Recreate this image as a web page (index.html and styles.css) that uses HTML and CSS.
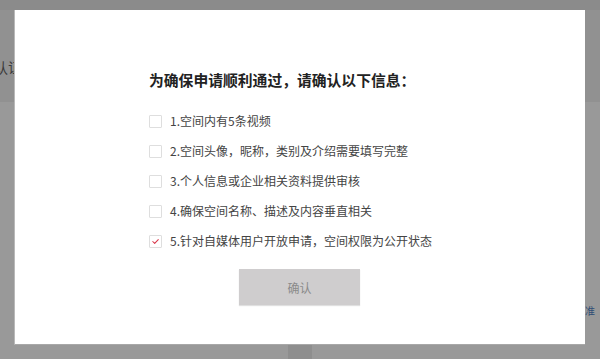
FILE: index.html
```html
<!DOCTYPE html>
<html lang="zh">
<head>
<meta charset="utf-8">
<link rel="stylesheet" href="styles.css">
</head>
<body>
<div class="page">
  <div class="topbar"></div>
  <div class="header"><span class="header-text">认证</span></div>
  <div class="main">
    <span class="side-link">准</span>
  </div>
  <div class="bottom-tab"></div>

  <div class="modal">
    <h2 class="title">为确保申请顺利通过，请确认以下信息：</h2>
    <ul class="list">
      <li class="item"><span class="box"></span><span class="label">1.空间内有5条视频</span></li>
      <li class="item"><span class="box"></span><span class="label">2.空间头像，昵称，类别及介绍需要填写完整</span></li>
      <li class="item"><span class="box"></span><span class="label">3.个人信息或企业相关资料提供审核</span></li>
      <li class="item"><span class="box"></span><span class="label">4.确保空间名称、描述及内容垂直相关</span></li>
      <li class="item"><span class="box checked"><svg viewBox="0 0 14 14" width="13" height="13"><polyline points="3.5,7 6,9.5 10.5,4.5" fill="none" stroke="#d8364a" stroke-width="1.3" stroke-linecap="round" stroke-linejoin="round"/></svg></span><span class="label">5.针对自媒体用户开放申请，空间权限为公开状态</span></li>
    </ul>
    <button class="btn">确认</button>
  </div>
</div>
</body>
</html>
```

FILE: styles.css
```css
* { box-sizing: border-box; }
html, body {
  margin: 0;
  padding: 0;
  width: 600px;
  height: 359px;
  overflow: hidden;
}
body {
  font-family: "Noto Sans CJK SC", "Noto Sans", sans-serif;
  background: #999999;
}
.page {
  position: relative;
  width: 600px;
  height: 359px;
}
.topbar {
  height: 10px;
  background: #8b8b8b;
}
.header {
  height: 92px;
  background: #919191;
  display: flex;
  align-items: flex-start;
  padding-top: 47px;
}
.header-text {
  font-size: 14px;
  line-height: 20px;
  color: #3a3a3a;
  margin-left: -6px;
}
.main {
  height: 257px;
  display: flex;
  justify-content: flex-end;
  padding-top: 203px;
}
.side-link {
  font-size: 10px;
  color: #2f4d75;
  margin-right: 5px;
  line-height: 12px;
}
.bottom-tab {
  position: absolute;
  left: 288px;
  top: 345px;
  width: 24px;
  height: 14px;
  background: #8e8e8e;
}
.modal {
  position: absolute;
  left: 14px;
  top: 10px;
  width: 571px;
  height: 335px;
  background: #ffffff;
  border-left: 1px solid #b9b9b9;
  border-bottom: 1px solid #a8a8a8;
  padding: 60px 0 0 134px;
  display: flex;
  flex-direction: column;
}
.title {
  margin: 0;
  font-size: 14.8px;
  line-height: 20px;
  font-weight: bold;
  color: #222222;
  letter-spacing: 0;
}
.list {
  list-style: none;
  margin: 16px 0 0 0;
  padding: 0;
}
.item {
  height: 30px;
  display: flex;
  align-items: center;
  gap: 8px;
}
.box {
  width: 13px;
  height: 13px;
  border: 1px solid #dedede;
  border-radius: 1px;
  display: flex;
  align-items: center;
  justify-content: center;
  flex: none;
}
.box svg { display: block; }
.label {
  font-size: 12px;
  color: #444444;
  line-height: 16px;
}
.btn {
  margin: 13px 0 0 90px;
  width: 121px;
  height: 36px;
  border: none;
  background: #cfcdce;
  color: #8a8a8a;
  font-family: "Noto Sans CJK SC", sans-serif;
  font-size: 12px;
  box-shadow: 0 1px 1px rgba(0,0,0,0.12);
  padding: 0;
}
```
